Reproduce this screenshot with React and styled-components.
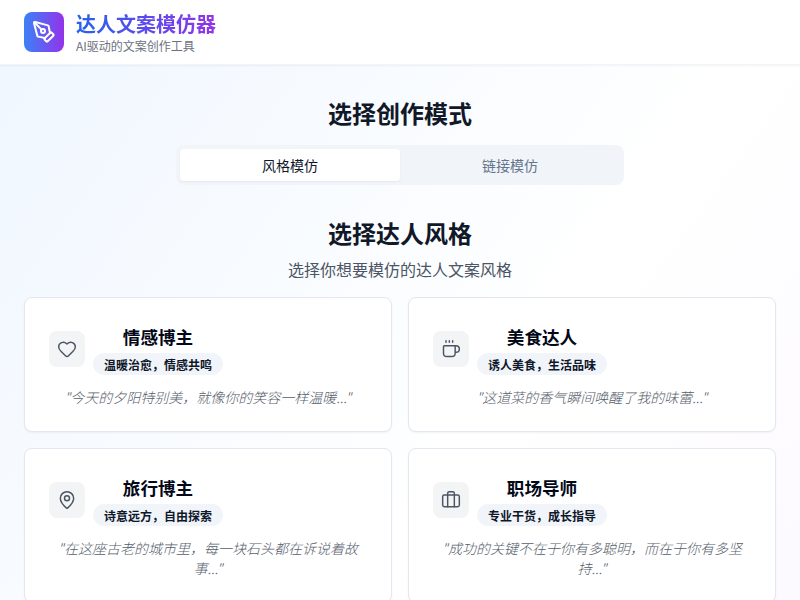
import React from 'react';
import styled, { createGlobalStyle } from 'styled-components';
import { PenTool, Heart, Coffee, MapPin, Briefcase } from 'lucide-react';

const Global = createGlobalStyle`
  html, body { margin: 0; padding: 0; }
  body { font-family: "Noto Sans CJK SC", sans-serif; color: #0f172a; }
  * { box-sizing: border-box; }
`;
const Page = styled.div`
  height: 600px;
  overflow: hidden;
  background: linear-gradient(to bottom right, #eff6ff, #ffffff, #faf5ff) 0 0 / 100% 1100px no-repeat;
`;
const Header = styled.header`
  display: flex;
  align-items: center;
  gap: 12px;
  height: 65px;
  padding: 0 24px;
  background: #fff;
  border-bottom: 1px solid #f1f5f9;
  box-shadow: 0 1px 2px rgba(0,0,0,0.05);
`;
const Logo = styled.div`
  width: 40px;
  height: 40px;
  border-radius: 8px;
  display: flex;
  align-items: center;
  justify-content: center;
  color: #fff;
  background: linear-gradient(to right, #3b82f6, #9333ea);
`;
const Brand = styled.div`
  display: flex;
  flex-direction: column;
`;
const BrandTitle = styled.h1`
  margin: 0;
  font-size: 20px;
  line-height: 28px;
  font-weight: 700;
  color: transparent;
  background: linear-gradient(to right, #2563eb, #9333ea);
  -webkit-background-clip: text;
  background-clip: text;
`;
const BrandSub = styled.p`
  margin: 0;
  font-size: 12px;
  line-height: 16px;
  color: #6b7280;
`;
const Main = styled.main`
  padding: 32px 24px 0;
`;
const Heading = styled.h2`
  margin: 0;
  font-size: 24px;
  line-height: 32px;
  font-weight: 700;
  text-align: center;
  color: #111827;
`;
const Tabs = styled.div`
  width: 448px;
  height: 40px;
  margin: 16px auto 32px;
  padding: 4px;
  display: grid;
  grid-template-columns: 1fr 1fr;
  background: #f1f5f9;
  border-radius: 8px;
`;
const Tab = styled.button`
  border: 0;
  border-radius: 4px;
  padding: 0;
  font: inherit;
  font-size: 14px;
  line-height: 20px;
  color: ${p => (p.$active ? '#0f172a' : '#64748b')};
  background: ${p => (p.$active ? '#fff' : 'transparent')};
  box-shadow: ${p => (p.$active ? '0 1px 2px rgba(0,0,0,0.05)' : 'none')};
`;
const Lead = styled.p`
  margin: 8px 0 0;
  font-size: 16px;
  line-height: 24px;
  text-align: center;
  color: #4b5563;
`;
const Grid = styled.div`
  margin-top: 16px;
  display: grid;
  grid-template-columns: 1fr 1fr;
  gap: 16px;
`;
const Card = styled.article`
  padding: 24px;
  background: #fff;
  border: 1px solid #e2e8f0;
  border-radius: 8px;
  box-shadow: 0 1px 2px rgba(0,0,0,0.05);
`;
const CardHead = styled.div`
  display: flex;
  align-items: center;
  gap: 8px;
`;
const IconBox = styled.div`
  width: 36px;
  height: 36px;
  border-radius: 8px;
  display: flex;
  align-items: center;
  justify-content: center;
  background: #f3f4f6;
  color: #4b5563;
`;
const Names = styled.div`
  display: flex;
  flex-direction: column;
  align-items: center;
`;
const Name = styled.h3`
  margin: 0 0 1px;
  font-size: 17.6px;
  line-height: 30px;
  font-weight: 600;
  color: #020817;
`;
const Badge = styled.span`
  display: inline-flex;
  height: 22px;
  align-items: center;
  padding: 0 10px;
  border: 1px solid transparent;
  border-radius: 999px;
  font-size: 12px;
  font-weight: 600;
  background: #f1f5f9;
  color: #0f172a;
`;
const Quote = styled.p`
  margin: 12px 0 0;
  font-size: 14px;
  line-height: 20px;
  font-style: italic;
  font-weight: 300;
  text-align: center;
  color: #565e6c;
`;

const creators = [
  { icon: Heart, name: '情感博主', tag: '温暖治愈，情感共鸣', quote: '"今天的夕阳特别美，就像你的笑容一样温暖..."' },
  { icon: Coffee, name: '美食达人', tag: '诱人美食，生活品味', quote: '"这道菜的香气瞬间唤醒了我的味蕾..."' },
  { icon: MapPin, name: '旅行博主', tag: '诗意远方，自由探索', quote: '"在这座古老的城市里，每一块石头都在诉说着故事..."' },
  { icon: Briefcase, name: '职场导师', tag: '专业干货，成长指导', quote: '"成功的关键不在于你有多聪明，而在于你有多坚持..."' },
];

export default function App() {
  return (
    <Page>
      <Global />
      <Header>
        <Logo><PenTool size={24} strokeWidth={2} /></Logo>
        <Brand>
          <BrandTitle>达人文案模仿器</BrandTitle>
          <BrandSub>AI驱动的文案创作工具</BrandSub>
        </Brand>
      </Header>
      <Main>
        <Heading>选择创作模式</Heading>
        <Tabs>
          <Tab $active>风格模仿</Tab>
          <Tab>链接模仿</Tab>
        </Tabs>
        <Heading>选择达人风格</Heading>
        <Lead>选择你想要模仿的达人文案风格</Lead>
        <Grid>
          {creators.map(({ icon: Icon, name, tag, quote }) => (
            <Card key={name}>
              <CardHead>
                <IconBox><Icon size={20} strokeWidth={1.75} /></IconBox>
                <Names>
                  <Name>{name}</Name>
                  <Badge>{tag}</Badge>
                </Names>
              </CardHead>
              <Quote>{quote}</Quote>
            </Card>
          ))}
        </Grid>
      </Main>
    </Page>
  );
}
